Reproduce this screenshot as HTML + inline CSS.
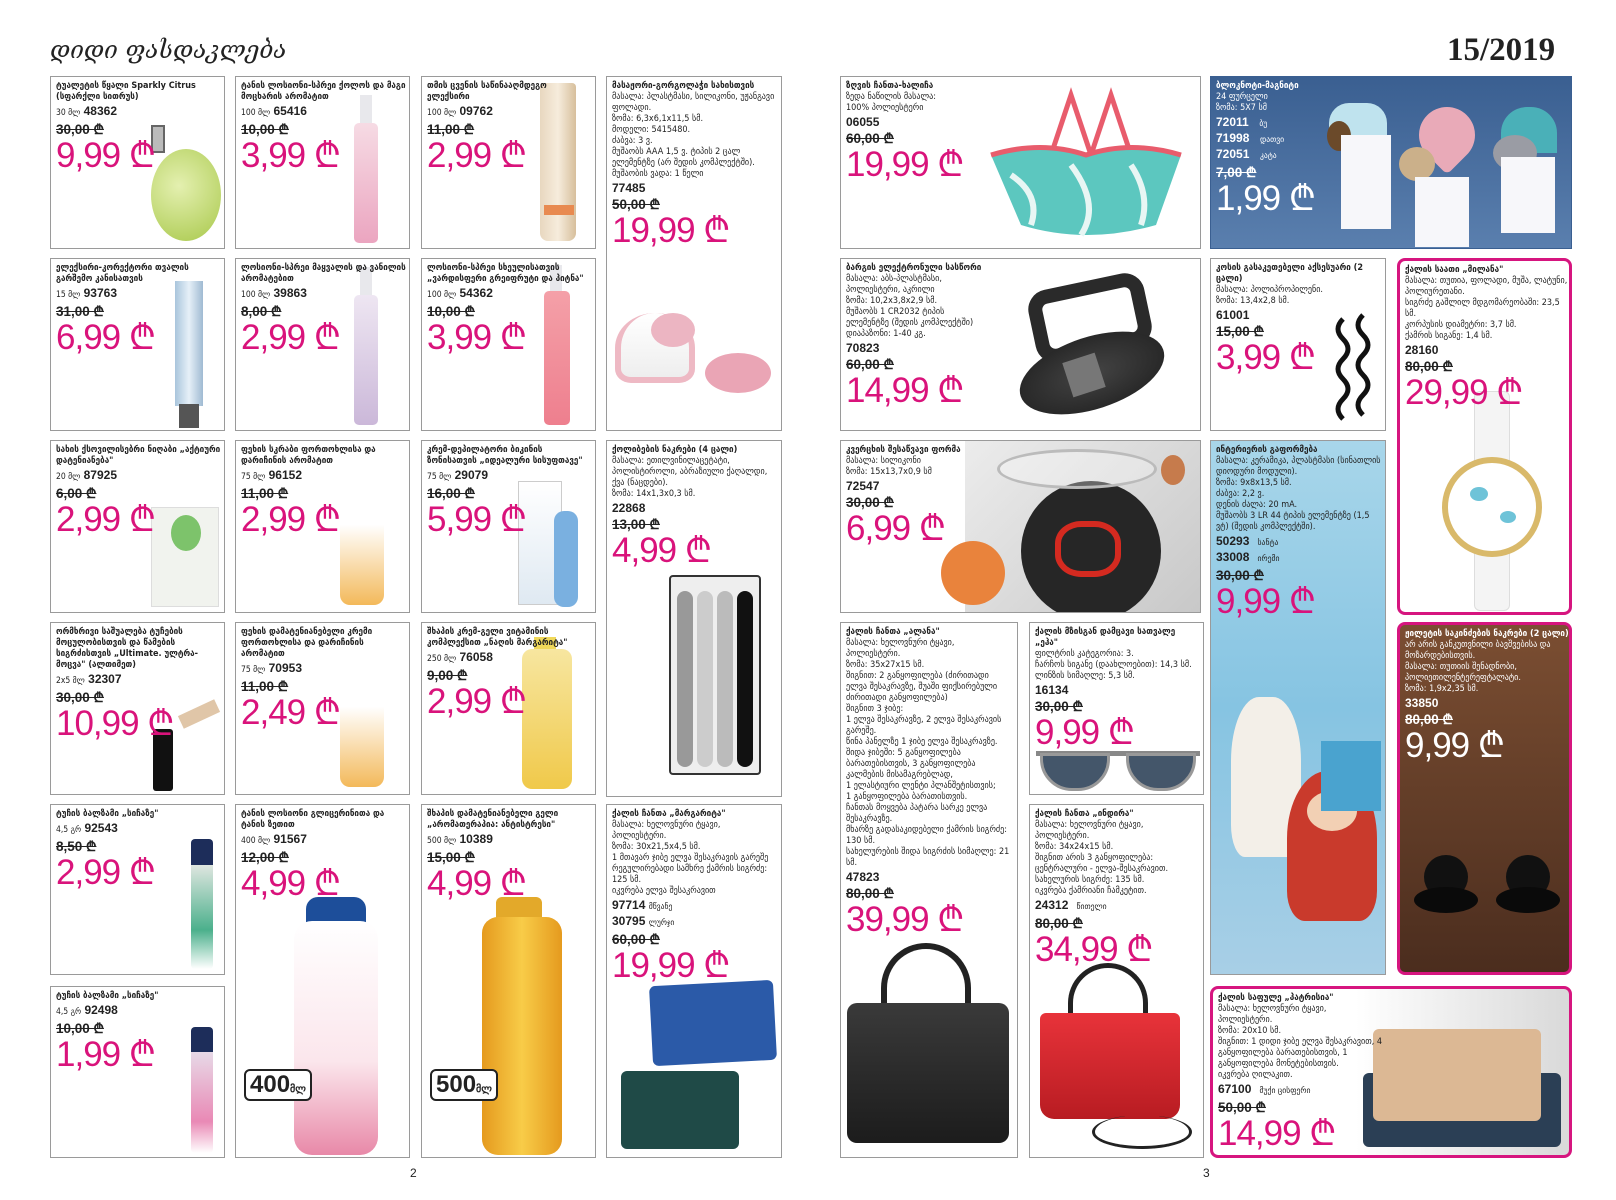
<!DOCTYPE html>
<html><head><meta charset="utf-8">
<style>
*{margin:0;padding:0;box-sizing:border-box}
body{width:1616px;height:1200px;background:#fff;position:relative;overflow:hidden;font-family:"DejaVu Sans Condensed","DejaVu Sans","Liberation Sans",sans-serif;color:#222}
.b{position:absolute;border:1px solid #9a9a9a;background:#fff;overflow:hidden}
.pk{border:3px solid #d6157f;border-radius:8px}
.t{position:absolute;left:5px;top:4px;z-index:2;font-size:9px;line-height:11px;width:165px}
.t b{font-weight:bold}
.c{font-family:"Liberation Sans",sans-serif;font-size:12px;font-weight:bold;line-height:14px;margin-top:1px}
.c span{font-family:"DejaVu Sans Condensed","DejaVu Sans",sans-serif;font-weight:normal;font-size:8.5px}
.o{font-family:"Liberation Sans",sans-serif;font-size:13.5px;font-weight:bold;text-decoration:line-through;line-height:16px;margin-top:2px}
.p{font-family:"Liberation Sans",sans-serif;font-size:35px;color:#d9137b;line-height:36px;letter-spacing:-1px;white-space:nowrap}
.w{color:#fff}
.im{position:absolute}
.h1{position:absolute;left:50px;top:36px;font-family:"DejaVu Serif","Liberation Serif",serif;font-style:italic;font-size:24px;color:#222}
.yr{position:absolute;left:1447px;top:32px;font-family:"Liberation Serif",serif;font-weight:bold;font-size:33px;color:#222}
.pg{position:absolute;top:1166px;font-family:"Liberation Sans",sans-serif;font-size:12px}
.badge{position:absolute;border:2px solid #222;border-radius:6px;background:#fff;font-family:"Liberation Sans",sans-serif;font-weight:bold;font-size:24px;padding:0 4px;z-index:3}
</style></head><body>
<div class="h1">დიდი ფასდაკლება</div>
<div class="yr">15/2019</div>

<div class="b" style="left:50px;top:76px;width:175px;height:173px">
<div class="t"><b>ტუალეტის წყალი Sparkly Citrus (სფარქლი სითრუს)</b><div class="c"><span>30 მლ</span> 48362</div><div class="o">30,00 ₾</div><div class="p">9,99 ₾</div></div>
<div class="im" style="left:100px;top:48px;width:14px;height:28px;background:#bbb;border:2px solid #666"></div>
<div class="im" style="left:100px;top:72px;width:70px;height:92px;border-radius:50%;background:radial-gradient(circle at 40% 40%,#e4f0b0,#a8c84a)"></div>
</div>
<div class="b" style="left:235px;top:76px;width:175px;height:173px">
<div class="t"><b>ტანის ლოსიონი-სპრეი ქოლოს და მაგი მოცხარის არომატით</b><div class="c"><span>100 მლ</span> 65416</div><div class="o">10,00 ₾</div><div class="p">3,99 ₾</div></div>
<div class="im" style="left:124px;top:18px;width:12px;height:30px;background:#e8e8ec"></div>
<div class="im" style="left:118px;top:46px;width:24px;height:120px;border-radius:5px;background:linear-gradient(#f6dbe4,#eba5c0)"></div>
</div>
<div class="b" style="left:421px;top:76px;width:175px;height:173px">
<div class="t"><b>თმის ცვენის საწინააღმდეგო ელექსირი</b><div class="c"><span>100 მლ</span> 09762</div><div class="o">11,00 ₾</div><div class="p">2,99 ₾</div></div>
<div class="im" style="left:118px;top:6px;width:36px;height:158px;border-radius:4px 4px 8px 8px;background:linear-gradient(90deg,#e8d7bf,#f6ecdc,#d7bf9c)"></div>
<div class="im" style="left:122px;top:128px;width:30px;height:10px;background:#e88a50"></div>
</div>
<div class="b" style="left:606px;top:76px;width:176px;height:355px">
<div class="t"><b>მასაჟორი-გორგოლაჭი სახისთვის</b><br>მასალა: პლასტმასი, სილიკონი, უჟანგავი ფოლადი.<br>ზომა: 6,3x6,1x11,5 სმ.<br>მოდელი: 5415480.<br>ძაბვა: 3 ვ.<br>მუშაობს AAA 1,5 ვ. ტიპის 2 ცალ ელემენტზე (არ შედის კომპლექტში).<br>მუშაობის ვადა: 1 წელი<div class="c">77485</div><div class="o">50,00 ₾</div><div class="p">19,99 ₾</div></div>
<div class="im" style="left:8px;top:236px;width:80px;height:70px;border-radius:50% 50% 20% 20%;background:linear-gradient(#fff,#eee);border:6px solid #eeb9c4;border-top:none"></div>
<div class="im" style="left:44px;top:236px;width:44px;height:34px;border-radius:50%;background:#ecb5c2"></div>
<div class="im" style="left:98px;top:276px;width:66px;height:40px;border-radius:50%;background:#eaa5b5"></div>
</div>

<div class="b" style="left:50px;top:258px;width:175px;height:173px">
<div class="t"><b>ელექსირი-კორექტორი თვალის გარშემო კანისათვის</b><div class="c"><span>15 მლ</span> 93763</div><div class="o">31,00 ₾</div><div class="p">6,99 ₾</div></div>
<div class="im" style="left:124px;top:22px;width:28px;height:125px;background:linear-gradient(90deg,#a9c5dc,#e6f0f8,#9fbad2)"></div>
<div class="im" style="left:128px;top:145px;width:20px;height:24px;background:#555"></div>
</div>
<div class="b" style="left:235px;top:258px;width:175px;height:173px">
<div class="t"><b>ლოსიონი-სპრეი მაყვალის და ვანილის არომატებით</b><div class="c"><span>100 მლ</span> 39863</div><div class="o">8,00 ₾</div><div class="p">2,99 ₾</div></div>
<div class="im" style="left:124px;top:8px;width:12px;height:30px;background:#e8e8ec"></div>
<div class="im" style="left:118px;top:36px;width:24px;height:130px;border-radius:5px;background:linear-gradient(#eee6f2,#cbb8d9)"></div>
</div>
<div class="b" style="left:421px;top:258px;width:175px;height:173px">
<div class="t"><b>ლოსიონი-სპრეი სხეულისათვის „ვარდისფერი გრეიფრუტი და პიტნა"</b><div class="c"><span>100 მლ</span> 54362</div><div class="o">10,00 ₾</div><div class="p">3,99 ₾</div></div>
<div class="im" style="left:128px;top:6px;width:12px;height:30px;background:#e8e8ec"></div>
<div class="im" style="left:122px;top:32px;width:26px;height:134px;border-radius:5px;background:linear-gradient(#f4a0a8,#ee7f8e)"></div>
</div>

<div class="b" style="left:50px;top:440px;width:175px;height:173px">
<div class="t"><b>სახის ქსოვილისებრი ნიღაბი „აქტიური დატენიანება"</b><div class="c"><span>20 მლ</span> 87925</div><div class="o">6,00 ₾</div><div class="p">2,99 ₾</div></div>
<div class="im" style="left:100px;top:66px;width:68px;height:100px;background:#f1f3ee;border:1px solid #ddd"></div>
<div class="im" style="left:120px;top:74px;width:30px;height:36px;border-radius:50%;background:#7dc36b"></div>
</div>
<div class="b" style="left:235px;top:440px;width:175px;height:173px">
<div class="t"><b>ფეხის სკრაბი ფორთოხლისა და დარიჩინის არომატით</b><div class="c"><span>75 მლ</span> 96152</div><div class="o">11,00 ₾</div><div class="p">2,99 ₾</div></div>
<div class="im" style="left:104px;top:30px;width:44px;height:134px;border-radius:4px 4px 10px 10px;background:linear-gradient(#fff 40%,#f3b95a)"></div>
</div>
<div class="b" style="left:421px;top:440px;width:175px;height:173px">
<div class="t"><b>კრემ-დეპილატორი ბიკინის ზონისათვის „იდეალური სისუფთავე"</b><div class="c"><span>75 მლ</span> 29079</div><div class="o">16,00 ₾</div><div class="p">5,99 ₾</div></div>
<div class="im" style="left:96px;top:40px;width:44px;height:124px;background:linear-gradient(#fff,#dfe9f2);border:1px solid #ccc"></div>
<div class="im" style="left:132px;top:70px;width:24px;height:96px;border-radius:10px;background:#7ab0e0"></div>
</div>
<div class="b" style="left:606px;top:440px;width:176px;height:357px">
<div class="t"><b>ქოლიბების ნაკრები (4 ცალი)</b><br>მასალა: ეთილვინილაცეტატი, პოლისტიროლი, აბრაზიული ქაღალდი, ქვა (ნაცდები).<br>ზომა: 14x1,3x0,3 სმ.<div class="c">22868</div><div class="o">13,00 ₾</div><div class="p">4,99 ₾</div></div>
<div class="im" style="left:62px;top:134px;width:92px;height:200px;border:2px solid #333;border-radius:4px;background:#eee"></div>
<div class="im" style="left:70px;top:150px;width:16px;height:176px;border-radius:8px;background:#999"></div>
<div class="im" style="left:90px;top:150px;width:16px;height:176px;border-radius:8px;background:#ccc"></div>
<div class="im" style="left:110px;top:150px;width:16px;height:176px;border-radius:8px;background:#bbb"></div>
<div class="im" style="left:130px;top:150px;width:16px;height:176px;border-radius:8px;background:#111"></div>
</div>

<div class="b" style="left:50px;top:622px;width:175px;height:173px">
<div class="t"><b>ორმხრივი საშუალება ტუჩების მოცულობისთვის და წამების სიგრძისთვის „Ultimate. ულტრა-მოცვა" (ალთიმეთ)</b><div class="c"><span>2x5 მლ</span> 32307</div><div class="o">30,00 ₾</div><div class="p">10,99 ₾</div></div>
<div class="im" style="left:102px;top:106px;width:20px;height:62px;background:#111;border-radius:3px"></div>
<div class="im" style="left:128px;top:84px;width:40px;height:14px;background:#e0c6a8;transform:rotate(-25deg)"></div>
</div>
<div class="b" style="left:235px;top:622px;width:175px;height:173px">
<div class="t"><b>ფეხის დამატენიანებელი კრემი ფორთოხლისა და დარიჩინის არომატით</b><div class="c"><span>75 მლ</span> 70953</div><div class="o">11,00 ₾</div><div class="p">2,49 ₾</div></div>
<div class="im" style="left:104px;top:30px;width:44px;height:134px;border-radius:4px 4px 10px 10px;background:linear-gradient(#fff 40%,#f3b95a)"></div>
</div>
<div class="b" style="left:421px;top:622px;width:175px;height:173px">
<div class="t"><b>შხაპის კრემ-გელი ვიტამინის კომპლექსით „ნაღის მარგარიტა"</b><div class="c"><span>250 მლ</span> 76058</div><div class="o">9,00 ₾</div><div class="p">2,99 ₾</div></div>
<div class="im" style="left:112px;top:14px;width:22px;height:12px;background:#f0d85a"></div>
<div class="im" style="left:100px;top:26px;width:50px;height:140px;border-radius:10px;background:linear-gradient(#f7e6a0,#f0c94a)"></div>
</div>

<div class="b" style="left:50px;top:804px;width:175px;height:171px">
<div class="t"><b>ტუჩის ბალზამი „სიჩაზე"</b><div class="c"><span>4,5 გრ</span> 92543</div><div class="o">8,50 ₾</div><div class="p">2,99 ₾</div></div>
<div class="im" style="left:140px;top:34px;width:22px;height:130px;border-radius:4px;background:linear-gradient(#1d2d5a 20%,#dfe6e0 20%,#4bb08c 70%,#fff)"></div>
</div>
<div class="b" style="left:50px;top:986px;width:175px;height:172px">
<div class="t"><b>ტუჩის ბალზამი „სიჩაზე"</b><div class="c"><span>4,5 გრ</span> 92498</div><div class="o">10,00 ₾</div><div class="p">1,99 ₾</div></div>
<div class="im" style="left:140px;top:40px;width:22px;height:126px;border-radius:4px;background:linear-gradient(#1d2d5a 20%,#e7d9e7 20%,#e989b5 75%,#fff)"></div>
</div>
<div class="b" style="left:235px;top:804px;width:175px;height:354px">
<div class="t"><b>ტანის ლოსიონი გლიცერინითა და ტანის ზეთით</b><div class="c"><span>400 მლ</span> 91567</div><div class="o">12,00 ₾</div><div class="p">4,99 ₾</div></div>
<div class="im" style="left:70px;top:92px;width:60px;height:30px;border-radius:12px 12px 0 0;background:#1d4e9a"></div>
<div class="im" style="left:58px;top:116px;width:84px;height:234px;border-radius:18px;background:linear-gradient(#fff,#fbe6ec 60%,#e889a8)"></div>
<div class="badge" style="left:8px;top:264px">400<span style="font-size:10px">მლ</span></div>
</div>
<div class="b" style="left:421px;top:804px;width:175px;height:354px">
<div class="t"><b>შხაპის დამატენიანებელი გელი „არომათერაპია: ანტისტრესი"</b><div class="c"><span>500 მლ</span> 10389</div><div class="o">15,00 ₾</div><div class="p">4,99 ₾</div></div>
<div class="im" style="left:74px;top:92px;width:46px;height:24px;background:#e3a92a;border-radius:6px 6px 0 0"></div>
<div class="im" style="left:60px;top:112px;width:80px;height:238px;border-radius:16px;background:linear-gradient(90deg,#e59a1e,#f8cc48,#e59a1e)"></div>
<div class="badge" style="left:8px;top:264px">500<span style="font-size:10px">მლ</span></div>
</div>
<div class="b" style="left:606px;top:804px;width:176px;height:354px">
<div class="t"><b>ქალის ჩანთა „მარგარიტა"</b><br>მასალა: ხელოვნური ტყავი, პოლიესტერი.<br>ზომა: 30x21,5x4,5 სმ.<br>1 მთავარ ჯიბე ელვა შესაკრავის გარეშე რეგულირებადი სამხრე ქამრის სიგრძე: 125 სმ.<br>იკვრება ელვა შესაკრავით<div class="c">97714 <span>მწვანე</span><br>30795 <span>ლურჯი</span></div><div class="o">60,00 ₾</div><div class="p">19,99 ₾</div></div>
<div class="im" style="left:44px;top:178px;width:124px;height:80px;background:#2b5aa8;border-radius:6px;transform:rotate(-3deg)"></div>
<div class="im" style="left:14px;top:266px;width:118px;height:78px;background:#1f4a47;border-radius:6px"></div>
</div>
<div class="pg" style="left:410px">2</div>

<div class="b" style="left:840px;top:76px;width:361px;height:173px">
<div class="t"><b>ზღვის ჩანთა-ხალიჩა</b><br>ზედა ნაწილის მასალა:<br>100% პოლიესტერი<div class="c">06055</div><div class="o">60,00 ₾</div><div class="p">19,99 ₾</div></div>
<svg class="im" style="left:140px;top:8px" width="210" height="160"><path d="M70 70 L90 10 L110 70 M110 70 L130 10 L150 70" stroke="#e85c6c" stroke-width="5" fill="none"/><path d="M10 70 Q60 55 105 70 Q150 55 200 70 L175 140 Q105 160 40 140 Z" fill="#5cc7bf"/><path d="M10 70 Q60 55 105 70 Q150 55 200 70" stroke="#e85c6c" stroke-width="5" fill="none"/><path d="M30 90 Q60 110 50 140 M90 80 Q120 120 100 150 M150 80 Q170 110 160 140" stroke="#e8f6f4" stroke-width="6" fill="none"/></svg>
</div>
<div class="b" style="left:1210px;top:76px;width:362px;height:173px;background:linear-gradient(#3a5f91,#5a7fae);border-color:#3a5f91">
<div class="t w"><b>ბლოკნოტი-მაგნიტი</b><br>24 ფურცელი<br>ზომა: 5X7 სმ<div class="c">72011 <span>&nbsp;&nbsp;&nbsp;ბუ</span><br>71998 <span>&nbsp;&nbsp;&nbsp;დათვი</span><br>72051 <span>&nbsp;&nbsp;&nbsp;კატა</span></div><div class="o">7,00 ₾</div><div class="p w">1,99 ₾</div></div>
<div class="im" style="left:118px;top:26px;width:58px;height:36px;border-radius:20px 20px 0 0;background:#bfe3ee"></div>
<div class="im" style="left:116px;top:44px;width:24px;height:30px;border-radius:50%;background:#6b4a2a"></div>
<div class="im" style="left:130px;top:58px;width:50px;height:94px;background:#f7f7fa"></div>
<div class="im" style="left:208px;top:30px;width:56px;height:56px;border-radius:50% 50% 10% 50%;background:#e9aab8;transform:rotate(45deg)"></div>
<div class="im" style="left:188px;top:70px;width:36px;height:34px;border-radius:50%;background:#cbb08a"></div>
<div class="im" style="left:204px;top:100px;width:54px;height:70px;background:#f7f7fa"></div>
<div class="im" style="left:290px;top:30px;width:56px;height:46px;border-radius:26px 26px 0 0;background:#4ab0b8"></div>
<div class="im" style="left:282px;top:58px;width:44px;height:36px;border-radius:50%;background:#9a9ca4"></div>
<div class="im" style="left:290px;top:80px;width:54px;height:76px;background:#f7f7fa"></div>
</div>

<div class="b" style="left:840px;top:258px;width:361px;height:173px">
<div class="t"><b>ბარგის ელექტრონული სასწორი</b><br>მასალა: აბს-პლასტმასი,<br>პოლიესტერი, აკრილი<br>ზომა: 10,2x3,8x2,9 სმ.<br>მუშაობს 1 CR2032 ტიპის<br>ელემენტზე (შედის კომპლექტში)<br>დიაპაზონი: 1-40 კგ.<div class="c">70823</div><div class="o">60,00 ₾</div><div class="p">14,99 ₾</div></div>
<div class="im" style="left:190px;top:22px;width:118px;height:74px;border:14px solid #2a2a2a;border-radius:20px;transform:rotate(-12deg)"></div>
<div class="im" style="left:176px;top:78px;width:150px;height:72px;border-radius:50%;background:radial-gradient(#444,#1d1d1d);transform:rotate(-18deg)"></div>
<div class="im" style="left:226px;top:98px;width:34px;height:36px;background:#777;transform:rotate(-18deg)"></div>
</div>
<div class="b" style="left:1210px;top:258px;width:176px;height:173px">
<div class="t"><b>კოსის გასაკეთებელი აქსესუარი (2 ცალი)</b><br>მასალა: პოლიპროპილენი.<br>ზომა: 13,4x2,8 სმ.<div class="c">61001</div><div class="o">15,00 ₾</div><div class="p">3,99 ₾</div></div>
<svg class="im" style="left:118px;top:50px" width="50" height="120"><path d="M14 10 q-10 10 0 20 q10 10 0 20 q-10 10 0 20 q10 10 0 20 q-10 10 0 20 M34 6 q-10 10 0 20 q10 10 0 20 q-10 10 0 20 q10 10 0 20 q-10 10 0 20" stroke="#111" stroke-width="5" fill="none"/></svg>
</div>
<div class="b pk" style="left:1397px;top:258px;width:175px;height:357px">
<div class="t"><b>ქალის საათი „მილანა"</b><br>მასალა: თუთია, ფოლადი, მუშა, ლატუნი, პოლიურეთანი.<br>სიგრძე გაშლილ მდგომარეობაში: 23,5 სმ.<br>კორპუსის დიამეტრი: 3,7 სმ.<br>ქამრის სიგანე: 1,4 სმ.<div class="c">28160</div><div class="o">80,00 ₾</div><div class="p">29,99 ₾</div></div>
<div class="im" style="left:74px;top:130px;width:36px;height:220px;background:#f4f4f4;border:1px solid #ddd;border-radius:6px"></div>
<div class="im" style="left:42px;top:196px;width:100px;height:100px;border-radius:50%;background:#fff;border:6px solid #d9b96a"></div>
<div class="im" style="left:70px;top:226px;width:18px;height:14px;background:#6ec3d8;border-radius:50%"></div>
<div class="im" style="left:100px;top:250px;width:16px;height:12px;background:#6ec3d8;border-radius:50%"></div>
</div>

<div class="b" style="left:840px;top:440px;width:361px;height:173px">
<div class="im" style="left:124px;top:0;width:237px;height:173px;background:linear-gradient(135deg,#ececec,#c8c8c8)"></div>
<div class="t"><b>კვერცხის შესაწვავი ფორმა</b><br>მასალა: სილიკონი<br>ზომა: 15x13,7x0,9 სმ<div class="c">72547</div><div class="o">30,00 ₾</div><div class="p">6,99 ₾</div></div>
<div class="im" style="left:180px;top:40px;width:140px;height:140px;border-radius:50%;background:#262626"></div>
<div class="im" style="left:214px;top:80px;width:66px;height:56px;border:6px solid #d42a20;border-radius:40%"></div>
<div class="im" style="left:100px;top:100px;width:64px;height:64px;border-radius:50%;background:#e9833c"></div>
<div class="im" style="left:156px;top:8px;width:160px;height:40px;border-radius:50%;border:3px solid #bbb;background:rgba(255,255,255,.3)"></div>
<div class="im" style="left:320px;top:14px;width:24px;height:30px;border-radius:50%;background:#c67b4c"></div>
</div>
<div class="b" style="left:1210px;top:440px;width:176px;height:535px;background:linear-gradient(#a8d6ea,#86c4e2 50%,#a8cfe6)">
<div class="t"><b>ინტერიერის გაფორმება</b><br>მასალა: კერამიკა, პლასტმასი (სინათლის დიოდური მოდული).<br>ზომა: 9x8x13,5 სმ.<br>ძაბვა: 2,2 ვ.<br>დენის ძალა: 20 mA.<br>მუშაობს 3 LR 44 ტიპის ელემენტზე (1,5 ვტ) (შედის კომპლექტში).<div class="c">50293 <span>&nbsp;&nbsp;სანტა</span><br>33008 <span>&nbsp;&nbsp;ირემი</span></div><div class="o">30,00 ₾</div><div class="p">9,99 ₾</div></div>
<div class="im" style="left:20px;top:256px;width:70px;height:160px;border-radius:40% 40% 20% 20%;background:#f3efe8"></div>
<div class="im" style="left:76px;top:330px;width:90px;height:150px;border-radius:45% 45% 20% 20%;background:#c93a2c"></div>
<div class="im" style="left:96px;top:350px;width:50px;height:40px;border-radius:50%;background:#f2d0b4"></div>
<div class="im" style="left:110px;top:300px;width:60px;height:70px;background:#4aa3cf"></div>
</div>
<div class="b pk" style="left:1397px;top:622px;width:175px;height:353px;background:linear-gradient(#7b4e32,#4b2d1e)">
<div class="t w"><b>ჟილეტის საკინძების ნაკრები (2 ცალი)</b><br>არ არის განკუთვნილი ბავშვებისა და მოზარდებისთვის.<br>მასალა: თუთიის შენადნობი, პოლიეთილენტერეფტალატი.<br>ზომა: 1,9x2,35 სმ.<div class="c">33850</div><div class="o">80,00 ₾</div><div class="p w">9,99 ₾</div></div>
<div class="im" style="left:24px;top:230px;width:44px;height:44px;border-radius:50%;background:#111"></div>
<div class="im" style="left:14px;top:262px;width:64px;height:26px;border-radius:50%;background:#0a0a0a"></div>
<div class="im" style="left:106px;top:230px;width:44px;height:44px;border-radius:50%;background:#111"></div>
<div class="im" style="left:96px;top:262px;width:64px;height:26px;border-radius:50%;background:#0a0a0a"></div>
</div>

<div class="b" style="left:840px;top:622px;width:178px;height:536px">
<div class="t"><b>ქალის ჩანთა „ალანა"</b><br>მასალა: ხელოვნური ტყავი, პოლიესტერი.<br>ზომა: 35x27x15 სმ.<br>შიგნით: 2 განყოფილება (ძირითადი ელვა შესაკრავზე, შუაში ფიქსირებული ძირითადი განყოფილება)<br>შიგნით 3 ჯიბე:<br>1 ელვა შესაკრავზე, 2 ელვა შესაკრავის გარეშე.<br>წინა პანელზე 1 ჯიბე ელვა შესაკრავზე.<br>შიდა ჯიბეში: 5 განყოფილება ბარათებისთვის, 3 განყოფილება კალმების მისამაგრებლად,<br>1 ელასტიური ლენტი პლანშეტისთვის;<br>1 განყოფილება ბარათისთვის.<br>ჩანთას მოყვება პატარა სარკე ელვა შესაკრავზე.<br>მხარზე გადასაკიდებელი ქამრის სიგრძე: 130 სმ.<br>სახელურების შიდა სიგრძის სიმაღლე: 21 სმ.<div class="c">47823</div><div class="o">80,00 ₾</div><div class="p">39,99 ₾</div></div>
<div class="im" style="left:40px;top:320px;width:90px;height:80px;border:6px solid #222;border-radius:45px 45px 0 0;border-bottom:none"></div>
<div class="im" style="left:6px;top:380px;width:162px;height:140px;border-radius:10px;background:linear-gradient(#3a3a3a,#1c1c1c)"></div>
</div>
<div class="b" style="left:1029px;top:622px;width:175px;height:173px">
<div class="t"><b>ქალის მზისგან დამცავი სათვალე „ეჰა"</b><br>ფილტრის კატეგორია: 3.<br>ჩარჩოს სიგანე (დაახლოებით): 14,3 სმ.<br>ლინზის სიმაღლე: 5,3 სმ.<div class="c">16134</div><div class="o">30,00 ₾</div><div class="p">9,99 ₾</div></div>
<div class="im" style="left:6px;top:128px;width:164px;height:5px;background:#888"></div>
<div class="im" style="left:10px;top:130px;width:70px;height:38px;border-radius:0 0 32px 32px;background:#44566a;border:3px solid #999"></div>
<div class="im" style="left:96px;top:130px;width:70px;height:38px;border-radius:0 0 32px 32px;background:#44566a;border:3px solid #999"></div>
</div>
<div class="b" style="left:1029px;top:804px;width:175px;height:354px">
<div class="t"><b>ქალის ჩანთა „ინდირა"</b><br>მასალა: ხელოვნური ტყავი, პოლიესტერი.<br>ზომა: 34x24x15 სმ.<br>შიგნით არის 3 განყოფილება: ცენტრალური - ელვა-შესაკრავით.<br>სახელურის სიგრძე: 135 სმ.<br>იკვრება ქამრიანი ჩამკეტით.<div class="c">24312 <span>&nbsp;&nbsp;წითელი</span></div><div class="o">80,00 ₾</div><div class="p">34,99 ₾</div></div>
<div class="im" style="left:38px;top:158px;width:80px;height:70px;border:5px solid #222;border-radius:40px 40px 0 0;border-bottom:none"></div>
<div class="im" style="left:10px;top:208px;width:140px;height:106px;background:linear-gradient(#e8333a,#b81c22);border-radius:6px 6px 14px 14px"></div>
<div class="im" style="left:62px;top:310px;width:100px;height:34px;border:3px solid #222;border-radius:50%;border-top:none"></div>
</div>
<div class="b pk" style="left:1210px;top:986px;width:362px;height:172px;background:linear-gradient(90deg,#fff 40%,#d9d9d9)">
<div class="t"><b>ქალის საფულე „პატრისია"</b><br>მასალა: ხელოვნური ტყავი, პოლიესტერი.<br>ზომა: 20x10 სმ.<br>შიგნით: 1 დიდი ჯიბე ელვა შესაკრავით, 4 განყოფილება ბარათებისთვის, 1 განყოფილება მონეტებისთვის.<br>იკვრება ღილაკით.<div class="c">67100 <span>&nbsp;&nbsp;მუქი ცისფერი</span></div><div class="o">50,00 ₾</div><div class="p">14,99 ₾</div></div>
<div class="im" style="left:150px;top:84px;width:198px;height:74px;background:#2b3f55;border-radius:6px"></div>
<div class="im" style="left:160px;top:40px;width:168px;height:92px;background:#dcb894;border-radius:6px"></div>
</div>
<div class="pg" style="left:1203px">3</div>
</body></html>
